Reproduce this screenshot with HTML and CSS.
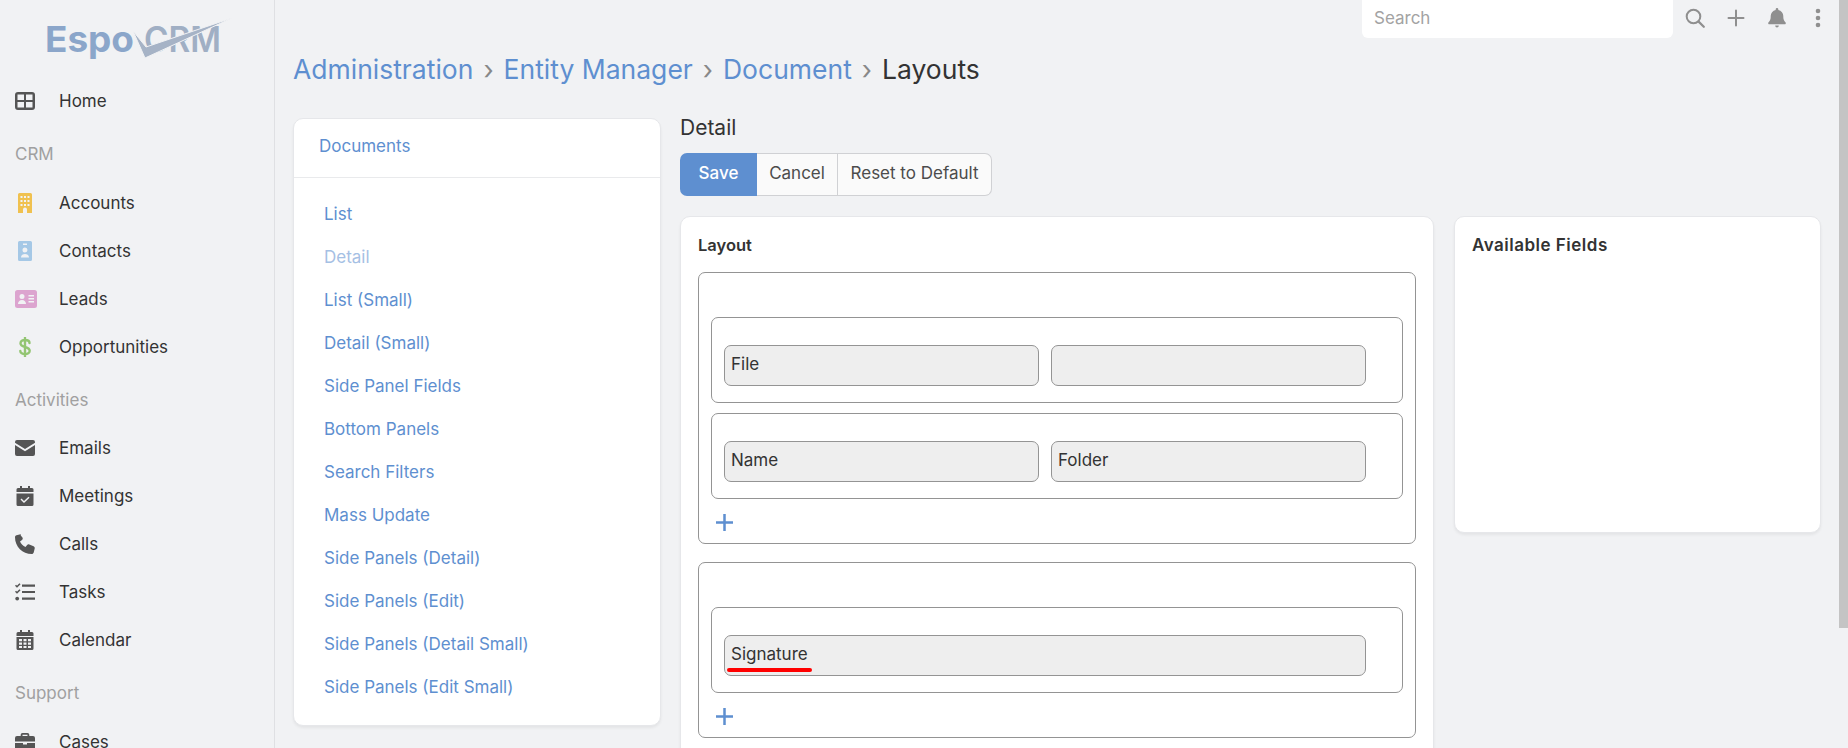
FILE: index.html
```html
<!DOCTYPE html>
<html lang="en">
<head>
    <meta charset="UTF-8">
    <title>Layouts</title>
    <link rel="stylesheet" href="styles.css">
</head>
<body>
    <aside class="sidebar">
        <div class="logo">
            <svg width="190" height="42" viewBox="0 0 190 42">
                <text class="logo-espo" x="-1" y="34" textLength="89" lengthAdjust="spacingAndGlyphs">Espo</text>
                <text class="logo-crm" x="98" y="34" textLength="77" lengthAdjust="spacingAndGlyphs">CRM</text>
                <path class="logo-check" d="M87 13 L99 40 L186 0 L100 29 Z"/>
            </svg>
        </div>
        <nav class="nav">
            <a class="nav-item">
                <svg class="icon" viewBox="0 0 20 18"><path fill="#555" d="M3 0h14a3 3 0 0 1 3 3v12a3 3 0 0 1-3 3H3a3 3 0 0 1-3-3V3a3 3 0 0 1 3-3zm-.5 2.500V8H9V2.500H2.500zM11 2.500V8h6.500V2.500H11zM2.500 10v5.500H9V10H2.500zm8.500 0v5.500h6.500V10H11z"/></svg>
                <span>Home</span>
            </a>
            <div class="nav-group">CRM</div>
            <a class="nav-item">
                <svg class="icon" viewBox="0 0 20 20"><path fill="#f0c14f" fill-rule="evenodd" d="M4.500 0h11A1.500 1.500 0 0 1 17 1.500V20h-5v-3.500a2 2 0 0 0-4 0V20H3V1.500A1.500 1.500 0 0 1 4.500 0zM5.500 3v2h2V3zm3.500 0v2h2V3zm3.500 0v2h2V3zM5.500 7v2h2V7zM9 7v2h2V7zm3.500 0v2h2V7zm-7 4v2h2v-2zm3.500 0v2h2v-2zm3.500 0v2h2v-2z"/></svg>
                <span>Accounts</span>
            </a>
            <a class="nav-item">
                <svg class="icon" viewBox="0 0 20 20"><path fill="#a5c8e6" fill-rule="evenodd" d="M4.500 0h11A1.500 1.500 0 0 1 17 1.500v17a1.500 1.500 0 0 1-1.500 1.500h-11A1.500 1.500 0 0 1 3 18.500v-17A1.500 1.500 0 0 1 4.500 0zM8 2.500v1.500h4V2.500zM10 6.500a2.500 2.500 0 1 0 0 5 2.500 2.500 0 0 0 0-5zM6 16.500h8c0-2-1.500-3.500-4-3.500s-4 1.500-4 3.500z"/></svg>
                <span>Contacts</span>
            </a>
            <a class="nav-item">
                <svg class="icon icon-wide" viewBox="0 0 22 18"><path fill="#dca4cf" fill-rule="evenodd" d="M2.500 0h17A2.500 2.500 0 0 1 22 2.500v13a2.500 2.500 0 0 1-2.500 2.500h-17A2.500 2.500 0 0 1 0 15.500v-13A2.500 2.500 0 0 1 2.500 0zM7 4a2.500 2.500 0 1 0 0 5 2.500 2.500 0 0 0 0-5zM3 14h8c0-2-1.500-4-4-4s-4 2-4 4zM13.500 5v1.500H19V5zm0 3v1.500H19V8zm0 3v1.500H19V11z"/></svg>
                <span>Leads</span>
            </a>
            <a class="nav-item">
                <svg class="icon" viewBox="0 0 20 20"><path fill="none" stroke="#93c572" stroke-width="2.400" stroke-linecap="round" d="M14.500 6c0-2-2-3-4.500-3S5.500 4.200 5.500 6.200c0 4.800 9.200 2.800 9.200 7.600 0 2-2.200 3.200-4.700 3.200s-4.700-1-4.700-3M10 .8v18.400"/></svg>
                <span>Opportunities</span>
            </a>
            <div class="nav-group">Activities</div>
            <a class="nav-item">
                <svg class="icon" viewBox="0 0 20 16"><path fill="#555" d="M2 0h16a2 2 0 0 1 2 2v.800L10 9 0 2.800V2a2 2 0 0 1 2-2zM0 5l10 6.200L20 5v9a2 2 0 0 1-2 2H2a2 2 0 0 1-2-2V5z"/></svg>
                <span>Emails</span>
            </a>
            <a class="nav-item">
                <svg class="icon" viewBox="0 0 20 20"><path fill="#555" fill-rule="evenodd" d="M5 0h2v2h6V0h2v2h2a1.500 1.500 0 0 1 1.500 1.500V6h-17V3.500A1.500 1.500 0 0 1 3 2h2zM1.500 7.500h17v11A1.500 1.500 0 0 1 17 20H3a1.500 1.500 0 0 1-1.500-1.500zm12 3.200L9 15l-2.500-2.500-1 1L9 17l5.500-5.300z"/></svg>
                <span>Meetings</span>
            </a>
            <a class="nav-item">
                <svg class="icon" viewBox="0 0 20 20"><path fill="#555" d="M5.500.300 1.500 1.300C.600 1.500 0 2.300 0 3.200 0 12.500 7.500 20 16.800 20c.900 0 1.700-.600 1.900-1.500l1-4c.200-.900-.200-1.800-1.100-2.200l-4.300-1.800c-.800-.300-1.600-.100-2.200.600l-1.600 2C8 11.900 6.100 10 5 7.500l2-1.600c.700-.500.900-1.400.600-2.200L5.800 1.400C5.400.500 6.400.100 5.500.300z"/></svg>
                <span>Calls</span>
            </a>
            <a class="nav-item">
                <svg class="icon" viewBox="0 0 20 18"><path fill="none" stroke="#555" stroke-width="1.600" d="M.500 2.200 2 3.700 5 .700M.500 8.200 2 9.700 5 6.700"/><circle cx="2.200" cy="15.600" r="1.900" fill="#555"/><path fill="none" stroke="#555" stroke-width="2.200" d="M7 2.600h13M7 9h13M7 15.600h13"/></svg>
                <span>Tasks</span>
            </a>
            <a class="nav-item">
                <svg class="icon" viewBox="0 0 20 20"><path fill="#555" fill-rule="evenodd" d="M5 0h2v2h6V0h2v2h2a1.500 1.500 0 0 1 1.500 1.500V6h-17V3.500A1.500 1.500 0 0 1 3 2h2zM1.500 7h17v11.500A1.500 1.500 0 0 1 17 20H3a1.500 1.500 0 0 1-1.500-1.500zM4 9v2.200h3V9zm4.500 0v2.200h3V9zM13 9v2.200h3V9zm-9 3.500v2.200h3v-2.200zm4.500 0v2.200h3v-2.200zm4.500 0v2.200h3v-2.200zM4 16v2h3v-2zm4.500 0v2h3v-2zm4.500 0v2h3v-2z"/></svg>
                <span>Calendar</span>
            </a>
            <div class="nav-group">Support</div>
            <a class="nav-item">
                <svg class="icon" viewBox="0 0 20 18"><path fill="#555" fill-rule="evenodd" d="M7.500 0h5A1.800 1.800 0 0 1 14.300 1.800V3H18a2 2 0 0 1 2 2v3.500H0V5a2 2 0 0 1 2-2h3.700V1.800A1.800 1.800 0 0 1 7.500 0zm0 1.700V3h5V1.700zM0 10h8v1.500h4V10h8v6a2 2 0 0 1-2 2H2a2 2 0 0 1-2-2z"/></svg>
                <span>Cases</span>
            </a>
        </nav>
    </aside>

    <div class="page">
        <header class="topbar">
            <div class="search">Search</div>
            <div class="top-icons">
                <svg class="top-icon" viewBox="0 0 20 20"><circle cx="8.500" cy="8.500" r="6.800" fill="none" stroke="#8f8f8f" stroke-width="2"/><path stroke="#8f8f8f" stroke-width="2.200" stroke-linecap="round" d="m13.600 13.600 5.200 5.200"/></svg>
                <svg class="top-icon" viewBox="0 0 20 20"><path stroke="#8f8f8f" stroke-width="2" stroke-linecap="round" d="M10 2.500v15M2.500 10h15"/></svg>
                <svg class="top-icon" viewBox="0 0 20 20"><path fill="#8f8f8f" d="M10 0c.800 0 1.300.600 1.300 1.300v.600c3 .600 5 3.100 5 6.100v1c0 1.900.700 3.700 1.900 5.100l.400.500c.500.700.100 1.600-.800 1.600H2.200c-.900 0-1.300-.900-.800-1.600l.400-.500C3 12.700 3.700 10.900 3.700 9V8c0-3 2-5.500 5-6.100v-.600C8.700.600 9.200 0 10 0zM8.200 17.500h3.600c0 1-.800 2-1.800 2s-1.800-1-1.800-2z"/></svg>
                <svg class="top-icon" viewBox="0 0 20 20"><g fill="#8f8f8f"><circle cx="10" cy="3" r="2.300"/><circle cx="10" cy="10" r="2.300"/><circle cx="10" cy="17" r="2.300"/></g></svg>
            </div>
        </header>

        <h3 class="breadcrumb">
            <a>Administration</a><span class="sep">›</span><a>Entity Manager</a><span class="sep">›</span><a>Document</a><span class="sep">›</span><span>Layouts</span>
        </h3>

        <div class="columns">
            <section class="card menu">
                <div class="menu-head">Documents</div>
                <ul class="menu-list">
                    <li>List</li>
                    <li class="disabled">Detail</li>
                    <li>List (Small)</li>
                    <li>Detail (Small)</li>
                    <li>Side Panel Fields</li>
                    <li>Bottom Panels</li>
                    <li>Search Filters</li>
                    <li>Mass Update</li>
                    <li>Side Panels (Detail)</li>
                    <li>Side Panels (Edit)</li>
                    <li>Side Panels (Detail Small)</li>
                    <li>Side Panels (Edit Small)</li>
                </ul>
            </section>

            <div class="editor">
                <h4 class="editor-title">Detail</h4>
                <div class="btn-group">
                    <button class="btn btn-primary">Save</button>
                    <button class="btn btn-cancel">Cancel</button>
                    <button class="btn btn-reset">Reset to Default</button>
                </div>
                <div class="editor-cols">
                    <section class="card layout-card">
                        <h5 class="card-title">Layout</h5>
                        <div class="panel">
                            <div class="row">
                                <div class="cell">File</div>
                                <div class="cell"></div>
                            </div>
                            <div class="row">
                                <div class="cell">Name</div>
                                <div class="cell">Folder</div>
                            </div>
                            <div class="add"><svg width="17" height="17" viewBox="0 0 17 17"><path d="M8.500 0v17M0 8.500h17"/></svg></div>
                        </div>
                        <div class="panel">
                            <div class="row">
                                <div class="cell cell-full">Signature<i class="mark"></i></div>
                            </div>
                            <div class="add"><svg width="17" height="17" viewBox="0 0 17 17"><path d="M8.500 0v17M0 8.500h17"/></svg></div>
                        </div>
                    </section>
                    <section class="card fields-card">
                        <h5 class="card-title">Available Fields</h5>
                    </section>
                </div>
            </div>
        </div>
    </div>

    <div class="scrollbar"><div class="scroll-thumb"></div></div>
</body>
</html>
```

FILE: styles.css
```css
/* VARIABLES */

:root {
    --bg: #f1f2f4;
    --text: #333333;
    --link: #5e8fd0;
    --line: #949494;
}

/* BASE */

html, body {
    height: 100%;
}

body {
    display: flex;
    margin: 0;
    height: 748px;
    overflow: hidden;
    background: var(--bg);
    color: var(--text);
    font-family: Inter, "Liberation Sans", sans-serif;
    font-size: 17px;
}

/* SIDEBAR */

.sidebar {
    flex: 0 0 274px;
    border-right: 1px solid #dfe0e3;
    overflow: hidden;
}

.logo {
    height: 77px;
    padding: 18px 0 0 46px;
    box-sizing: border-box;
}

.logo svg {
    overflow: visible;
}

.logo-espo {
    font: 700 36px Inter, sans-serif;
    fill: #8ba6ca;
}

.logo-crm {
    font: 600 35px Inter, sans-serif;
    fill: #a0afc4;
}

.logo-check {
    fill: #a6b3c6;
    stroke: var(--bg);
    stroke-width: 1;
}

.nav-item {
    display: flex;
    align-items: center;
    height: 48px;
    padding-left: 15px;
}

.nav-item span {
    margin-left: 24px;
}

.icon {
    flex: none;
    width: 20px;
    height: 20px;
}

.icon-wide {
    width: 22px;
    margin-right: -2px;
}

.nav-group {
    display: flex;
    align-items: center;
    height: 53.500px;
    padding: 5px 0 0 15px;
    box-sizing: border-box;
    color: #a0a0a0;
}

/* TOP BAR */

.page {
    flex: 1;
    min-width: 0;
    padding: 0 19px 0 18px;
}

.topbar {
    display: flex;
    justify-content: flex-end;
    height: 38px;
    margin-right: -19px;
}

.search {
    width: 311px;
    box-sizing: border-box;
    padding: 0 12px;
    line-height: 36px;
    background: white;
    border-radius: 0 0 6px 6px;
    color: #a3a3a3;
}

.top-icons {
    display: flex;
    align-items: center;
    gap: 21px;
    margin-left: 12px;
    padding-right: 11px;
    height: 36px;
}

.top-icon {
    width: 20px;
    height: 20px;
}

/* BREADCRUMB */

.breadcrumb {
    margin: 13px 0 31px;
    font-size: 26.500px;
    font-weight: 400;
    line-height: 36px;
}

.breadcrumb a {
    color: var(--link);
}

.sep {
    margin: 0 10px;
    color: #888;
}

/* COLUMNS */

.columns {
    display: grid;
    grid-template-columns: 368px 1fr;
    gap: 19px;
    align-items: start;
}

.card {
    background: white;
    border: 1px solid #e6e7ea;
    border-radius: 10px;
    box-shadow: 0 2px 3px rgba(0, 0, 0, .06);
    box-sizing: border-box;
}

/* LEFT MENU */

.menu {
    height: 608px;
}

.menu-head {
    height: 58px;
    padding-left: 25px;
    line-height: 54px;
    border-bottom: 1px solid #e9eaec;
    color: var(--link);
}

.menu-list {
    margin: 0;
    padding: 15px 0 0 30px;
    list-style: none;
    color: var(--link);
}

.menu-list li {
    height: 43px;
    line-height: 43px;
}

.menu-list .disabled {
    color: #a5c0e4;
}

/* EDITOR */

.editor-title {
    margin: 0;
    height: 35px;
    font-size: 21px;
    font-weight: 400;
    line-height: 20px;
}

.btn-group {
    display: flex;
    height: 43px;
    margin-bottom: 20px;
}

.btn {
    margin: 0;
    padding: 0 0 3px;
    font: inherit;
    color: #4c4c4c;
    background: #fafafa;
    border: 1px solid #d0d1d4;
    border-left: 0;
}

.btn-primary {
    width: 77px;
    color: white;
    font-weight: 500;
    background: #5e8fd0;
    border: 0;
    border-radius: 7px 0 0 7px;
}

.btn-cancel {
    width: 81px;
}

.btn-reset {
    width: 154px;
    border-radius: 0 7px 7px 0;
}

.editor-cols {
    display: grid;
    grid-template-columns: 754px 367px;
    gap: 20px;
    align-items: start;
}

.card-title {
    margin: 0;
    font-size: 16.500px;
    font-weight: 600;
    line-height: 20px;
}

.layout-card {
    height: 560px;
    padding: 18px 17px 0;
}

.fields-card {
    height: 317px;
    padding: 18px 17px;
}

.fields-card .card-title {
    font-size: 17px;
    letter-spacing: .5px;
}

/* LAYOUT PANELS */

.panel {
    display: flex;
    flex-direction: column;
    gap: 10px;
    margin-top: 18px;
    padding: 44px 12px 0;
    border: 1px solid var(--line);
    border-radius: 7px;
}

.card-title + .panel {
    margin-top: 17px;
}

.row {
    display: flex;
    gap: 12px;
    height: 86px;
    box-sizing: border-box;
    padding: 27px 36px 0 12px;
    border: 1px solid var(--line);
    border-radius: 7px;
}

.cell {
    position: relative;
    flex: 0 0 315px;
    height: 41px;
    box-sizing: border-box;
    padding-left: 6px;
    line-height: 37px;
    background: #eeeeee;
    border: 1px solid var(--line);
    border-radius: 7px;
}

.cell-full {
    flex: 1;
}

.mark {
    position: absolute;
    left: 2px;
    bottom: 3px;
    width: 85px;
    height: 4px;
    background: #ff0000;
    border-radius: 2px;
}

.add {
    display: flex;
    align-items: center;
    height: 44px;
    box-sizing: border-box;
    margin-top: -10px;
    padding: 3px 0 0 5px;
}

.add path {
    fill: none;
    stroke: var(--link);
    stroke-width: 2.500;
}

/* SCROLLBAR */

.scrollbar {
    flex: 0 0 9px;
    background: #f1f2f4;
}

.scroll-thumb {
    height: 628px;
    background: #c4c4c4;
}
```
